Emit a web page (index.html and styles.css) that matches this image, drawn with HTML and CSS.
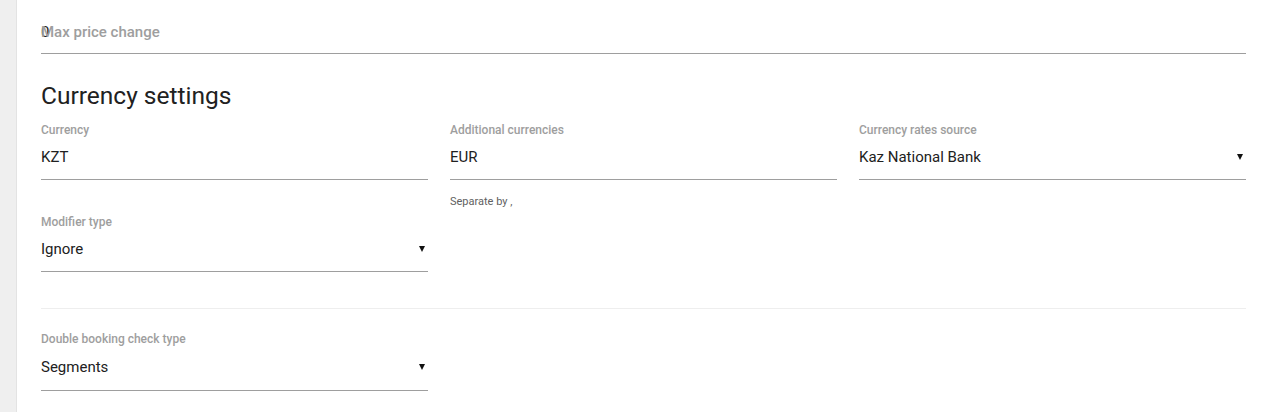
FILE: index.html
```html
<!DOCTYPE html>
<html>
<head>
<meta charset="utf-8">
<link rel="stylesheet" href="styles.css">
</head>
<body>
<div class="page">
  <aside class="rail"></aside>
  <main class="card">
    <div class="top-field">
      <span class="top-value">0</span>
      <span class="top-label">Max price change</span>
    </div>

    <h2 class="section-title">Currency settings</h2>

    <div class="grid">
      <div class="field">
        <div class="label">Currency</div>
        <div class="control"><span class="value">KZT</span></div>
      </div>
      <div class="field">
        <div class="label">Additional currencies</div>
        <div class="control"><span class="value">EUR</span></div>
        <div class="hint">Separate by ,</div>
      </div>
      <div class="field">
        <div class="label">Currency rates source</div>
        <div class="control"><span class="value">Kaz National Bank</span><span class="arrow"></span></div>
      </div>
      <div class="field">
        <div class="label">Modifier type</div>
        <div class="control"><span class="value">Ignore</span><span class="arrow"></span></div>
      </div>
    </div>

    <hr class="divider">

    <div class="grid grid-bottom">
      <div class="field">
        <div class="label">Double booking check type</div>
        <div class="control"><span class="value">Segments</span><span class="arrow"></span></div>
      </div>
    </div>
  </main>
</div>
</body>
</html>
```

FILE: styles.css
```css
* { box-sizing: border-box; }

html, body {
  margin: 0;
  padding: 0;
  background: #ffffff;
  font-family: Roboto, "Liberation Sans", Arial, sans-serif;
  color: #212121;
  overflow: hidden;
}

.page {
  display: flex;
  height: 412px;
}

.rail {
  width: 17px;
  flex: none;
  background: #efefef;
  border-right: 1px solid #e3e3e3;
}

.card {
  flex: 1;
  padding: 0 16px 0 24px;
  background: #fff;
}

.top-field {
  position: relative;
  height: 54px;
  border-bottom: 1px solid #9e9e9e;
  padding-top: 22px;
}

.top-value {
  font-size: 15px;
  line-height: 20px;
  color: #212121;
}

.top-label {
  position: absolute;
  left: 0;
  top: 22px;
  font-size: 15px;
  line-height: 20px;
  font-weight: 500;
  color: #9e9e9e;
}

.section-title {
  margin: 26px 0 10px;
  font-size: 24.5px;
  line-height: 32px;
  font-weight: 400;
  color: #212121;
}

.grid {
  display: grid;
  grid-template-columns: repeat(3, 1fr);
  column-gap: 22px;
}

.field {
  min-height: 92px;
  display: flex;
  flex-direction: column;
}

.grid-bottom .field {
  min-height: 0;
}

.grid-bottom .control {
  height: 44px;
}

.label {
  font-size: 12px;
  line-height: 16px;
  font-weight: 500;
  color: #9e9e9e;
}

.control {
  height: 42px;
  border-bottom: 1px solid #9e9e9e;
  display: flex;
  align-items: center;
  justify-content: space-between;
  padding: 0 3px 4px 0;
}

.value {
  font-size: 15px;
  line-height: 20px;
  color: #212121;
}

.arrow {
  width: 0;
  height: 0;
  border-left: 3.5px solid transparent;
  border-right: 3.5px solid transparent;
  border-top: 6px solid #111;
}

.hint {
  margin-top: 15px;
  font-size: 11px;
  line-height: 14px;
  color: #616161;
}

.divider {
  margin: 2px 0 22px;
  border: 0;
  border-top: 1px solid #eeeeee;
  height: 0;
}
```
